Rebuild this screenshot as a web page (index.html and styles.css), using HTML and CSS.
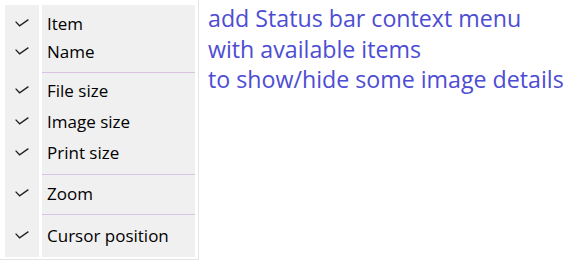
FILE: index.html
```html
<!DOCTYPE html>
<html>
<head>
<meta charset="utf-8">
<link rel="stylesheet" href="styles.css">
</head>
<body>
<div class="page">
  <div class="menu">
    <div class="row first">
      <div class="check"><svg class="tick" width="14" height="8" viewBox="0 0 14 8"><polyline points="0.6,2.6 4.6,6.8 13.4,0.6"/></svg></div>
      <div class="label">Item</div>
    </div>
    <div class="row">
      <div class="check"><svg class="tick" width="14" height="8" viewBox="0 0 14 8"><polyline points="0.6,2.6 4.6,6.8 13.4,0.6"/></svg></div>
      <div class="label">Name</div>
    </div>
    <div class="row sep sep-a"><div class="check"></div><div class="label"><div class="line"></div></div></div>
    <div class="row grp">
      <div class="check"><svg class="tick" width="14" height="8" viewBox="0 0 14 8"><polyline points="0.6,2.6 4.6,6.8 13.4,0.6"/></svg></div>
      <div class="label">File size</div>
    </div>
    <div class="row grp">
      <div class="check"><svg class="tick" width="14" height="8" viewBox="0 0 14 8"><polyline points="0.6,2.6 4.6,6.8 13.4,0.6"/></svg></div>
      <div class="label">Image size</div>
    </div>
    <div class="row grp">
      <div class="check"><svg class="tick" width="14" height="8" viewBox="0 0 14 8"><polyline points="0.6,2.6 4.6,6.8 13.4,0.6"/></svg></div>
      <div class="label">Print size</div>
    </div>
    <div class="row sep sep-b"><div class="check"></div><div class="label"><div class="line"></div></div></div>
    <div class="row grp">
      <div class="check"><svg class="tick" width="14" height="8" viewBox="0 0 14 8"><polyline points="0.6,2.6 4.6,6.8 13.4,0.6"/></svg></div>
      <div class="label">Zoom</div>
    </div>
    <div class="row sep sep-c"><div class="check"></div><div class="label"><div class="line"></div></div></div>
    <div class="row last">
      <div class="check"><svg class="tick" width="14" height="8" viewBox="0 0 14 8"><polyline points="0.6,2.6 4.6,6.8 13.4,0.6"/></svg></div>
      <div class="label">Cursor position</div>
    </div>
  </div>
  <div class="note">
    <div>add Status bar context menu</div>
    <div>with available items</div>
    <div>to show/hide some image details</div>
  </div>
</div>
</body>
</html>
```
FILE: styles.css
```css
html, body {
  margin: 0;
  padding: 0;
  background: #ffffff;
}
.page {
  display: flex;
  align-items: flex-start;
  font-family: "Open Sans", "Noto Sans", sans-serif;
}
.menu {
  width: 199px;
  height: 260px;
  box-sizing: border-box;
  padding: 5px 3px 2px 5px;
  border-right: 1px solid #e4e4e4;
  border-bottom: 1px solid #e4e4e4;
  display: flex;
  flex-direction: column;
  flex: none;
}
.row {
  display: flex;
  gap: 3px;
  color: #000000;
  font-size: 17px;
}
.check {
  width: 34px;
  flex: none;
  background: #f0f0f0;
  display: flex;
  justify-content: center;
  align-items: flex-start;
}
.label {
  flex: 1;
  background: #f0f0f0;
  padding-left: 5px;
  padding-top: 1px;
  line-height: 28px;
  height: 27px;
  white-space: nowrap;
  overflow: visible;
}
.tick {
  margin-top: 10px;
  fill: none;
  stroke: #222222;
  stroke-width: 1.3;
}
.first .check { padding-top: 4px; }
.first .label { padding-top: 5px; }
.grp .check, .grp .label { padding-bottom: 3px; }
.last { flex: 1; }
.last .label, .last .check { height: auto; }
.sep .label { height: auto; line-height: 0; padding-left: 0; }
.line { height: 1px; background: #d9c3e0; }
.sep-a .label { padding-top: 7px; padding-bottom: 3px; }
.sep-b .label { padding-top: 5px; padding-bottom: 4px; }
.sep-c .label { padding-top: 4px; padding-bottom: 6px; }
.note {
  margin-left: 9px;
  margin-top: 3px;
  color: #4d4dd3;
  font-size: 23.2px;
  line-height: 30.5px;
  white-space: nowrap;
}
```
